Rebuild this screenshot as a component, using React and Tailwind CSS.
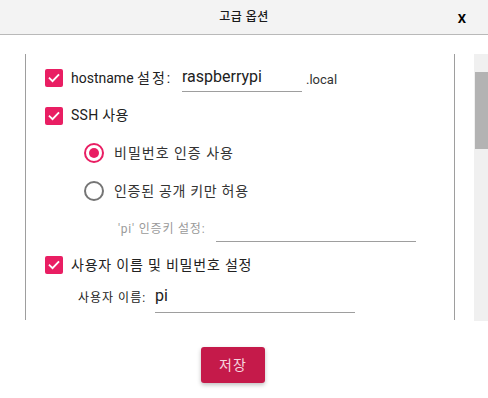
import React from 'react';

const font = { fontFamily: 'Roboto, "Noto Sans CJK KR", sans-serif' };

function Check() {
  return (
    <span className="flex h-[18px] w-[18px] shrink-0 items-center justify-center rounded-[2px] bg-[#e91e63]">
      <svg width="14" height="14" viewBox="0 0 24 24" fill="none">
        <path d="M4.5 12.5l5 5L19.5 7" stroke="#fff" strokeWidth="3.2" strokeLinecap="square" />
      </svg>
    </span>
  );
}

function Radio({ on }) {
  return on ? (
    <span className="flex h-[20px] w-[20px] shrink-0 items-center justify-center rounded-full border-2 border-[#e91e63]">
      <span className="h-[10px] w-[10px] rounded-full bg-[#e91e63]" />
    </span>
  ) : (
    <span className="h-[20px] w-[20px] shrink-0 rounded-full border-2 border-[#757575]" />
  );
}

export default function App() {
  return (
    <div className="flex h-[398px] w-[488px] flex-col overflow-hidden bg-white" style={font}>
      <div className="relative flex h-[35px] shrink-0 items-center justify-center border-b border-[#b9b9b9] bg-[#f3f3f3]">
        <span className="text-[12px] font-medium tracking-[0.5px] text-[#1a1a1a]">고급 옵션</span>
        <span className="absolute right-[22px] top-[9px] text-[13px] font-bold text-black">X</span>
      </div>

      <div className="flex pt-[19px]">
        <div className="ml-[25px] h-[266px] w-[430px] overflow-hidden border-x border-[#9e9e9e] pt-[5px] text-[#212121]">
          <div className="flex h-[38px] items-center pl-[19px]">
            <Check />
            <span className="ml-[8px] w-[111px] text-[14px]">
              hostname <span className="tracking-[2px]">설정:</span>
            </span>
            <div className="flex h-[28px] w-[120px] items-start border-b border-[#9e9e9e] text-[16px] leading-[26px]">raspberrypi</div>
            <span className="ml-[4px] mt-[4px] text-[13px] text-[#333]">.local</span>
          </div>
          <div className="flex h-[37px] items-center pl-[19px]">
            <Check />
            <span className="ml-[8px] text-[14px] tracking-[0.3px]">SSH 사용</span>
          </div>
          <div className="flex h-[38px] items-center pl-[58px]">
            <Radio on />
            <span className="ml-[10px] text-[14px] tracking-[1px] text-[#333]">비밀번호 인증 사용</span>
          </div>
          <div className="flex h-[38px] items-center pl-[58px]">
            <Radio />
            <span className="ml-[10px] text-[14px] tracking-[0.7px] text-[#333]">인증된 공개 키만 허용</span>
          </div>
          <div className="flex h-[37px] items-center pl-[92px]">
            <span className="w-[98px] text-[12px] tracking-[0.8px] text-[#9a9a9a]">'pi' 인증키 설정:</span>
            <div className="h-[26px] w-[200px] border-b border-[#9e9e9e]" />
          </div>
          <div className="flex h-[36px] items-center pl-[19px]">
            <Check />
            <span className="ml-[8px] text-[14px] tracking-[0.8px]">사용자 이름 및 비밀번호 설정</span>
          </div>
          <div className="flex h-[30px] items-center pl-[52px]">
            <span className="w-[77px] text-[12px] tracking-[1px]">사용자 이름:</span>
            <div className="h-[30px] w-[200px] border-b border-[#9e9e9e] text-[16px] leading-[26px]">pi</div>
          </div>
        </div>
        <div className="ml-[19px] h-[267px] w-[14px] bg-[#f0f0f0] pl-px pt-[18px]">
          <div className="h-[77px] w-[13px] bg-[#b3b3b3]" />
        </div>
      </div>

      <div className="pl-[201px] pt-[26px]">
        <button className="h-[36px] w-[64px] rounded-[3px] bg-[#c51a4a] text-[14px] tracking-[1px] text-[#f5d5de] shadow-[0_2px_4px_rgba(0,0,0,0.25)]">
          저장
        </button>
      </div>
    </div>
  );
}
